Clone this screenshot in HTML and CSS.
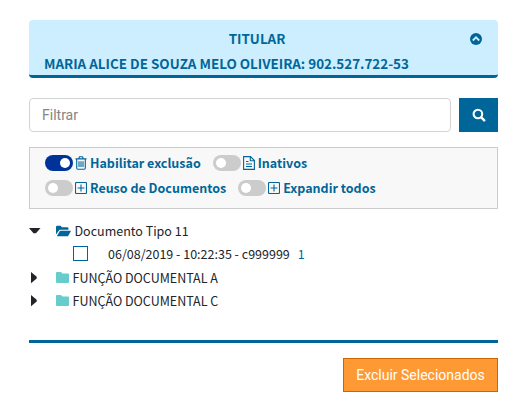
FILE: index.html
```html
<!DOCTYPE html>
<html lang="pt-BR">
<head>
<meta charset="utf-8">
<title>Titular</title>
<link rel="stylesheet" href="styles.css">
</head>
<body>
<main class="page">
  <header class="holder">
    <div class="holder-top">
      <span class="holder-title">TITULAR</span>
      <svg class="holder-icon" viewBox="0 0 12 12"><circle cx="6" cy="6" r="6" fill="#069"/><path d="M2.8 7.5 6 4.3l3.2 3.2" fill="none" stroke="#cef" stroke-width="1.8"/></svg>
    </div>
    <div class="holder-name">MARIA ALICE DE SOUZA MELO OLIVEIRA: 902.527.722-53</div>
  </header>

  <div class="search">
    <input class="search-input" type="text" placeholder="Filtrar">
    <button class="search-button" aria-label="Filtrar"><svg width="14" height="14" viewBox="0 0 14 14"><circle cx="5.9" cy="6" r="4.3" fill="none" stroke="#fff" stroke-width="2.1"/><path d="m9.2 9.4 3 3" stroke="#fff" stroke-width="2.4" stroke-linecap="round"/></svg></button>
  </div>

  <section class="options">
    <div class="option-row">
      <label class="option"><span class="toggle on"></span><svg class="option-icon" viewBox="0 0 12 14"><path d="M.5 2.9h11M3.7 2.7l.8-1.9h3l.8 1.9M1.7 3v9.1q0 1.2 1.1 1.2h6.4q1.1 0 1.1-1.2V3M4 5.2v5.8M6 5.2v5.8M8 5.2v5.8"/></svg><span class="label">Habilitar exclusão</span></label>
      <label class="option"><span class="toggle"></span><svg class="option-icon file" viewBox="0 0 12 14"><path d="M.6.6h6.9l3.9 3.9v8.9H.6zM7.3.8v3.9h4M3 5.5h2.5M3 8h6M3 10.5h6"/></svg><span class="label">Inativos</span></label>
    </div>
    <div class="option-row">
      <label class="option"><span class="toggle"></span><svg class="option-icon plus" viewBox="0 0 12 12"><path d="M1.5.5h9q1 0 1 1v9q0 1-1 1h-9q-1 0-1-1v-9q0-1 1-1M6 2.6v6.8M2.6 6h6.8"/></svg><span class="label">Reuso de Documentos</span></label>
      <label class="option"><span class="toggle"></span><svg class="option-icon plus" viewBox="0 0 12 12"><path d="M1.5.5h9q1 0 1 1v9q0 1-1 1h-9q-1 0-1-1v-9q0-1 1-1M6 2.6v6.8M2.6 6h6.8"/></svg><span class="label">Expandir todos</span></label>
    </div>
  </section>

  <section class="tree">
    <div class="node open">
      <span class="arrow"><svg width="12" height="6" viewBox="0 0 12 6"><path d="M0 0h11.5L7 5.3H4.5z"/></svg></span>
      <svg class="folder-open" viewBox="0 0 15 12"><path d="M0 9.5V2Q0 .7 1.3.7h3.2L6 2.2h5.2q1.3 0 1.3 1.3v1.2H4.2q-.8 0-1.2.7z"/><path d="M.8 11.3 3.7 6.2q.3-.5.8-.5h9.9q.7 0 .4.6l-2.5 4.5q-.3.5-.9.5z"/></svg>
      <span>Documento Tipo 11</span>
    </div>
    <div class="leaf"><span class="checkbox"></span><span>06/08/2019 - 10:22:35 - c999999</span><span class="count">1</span></div>
    <div class="node">
      <span class="arrow"><svg width="6" height="12" viewBox="0 0 6 12"><path d="M0 0 5.7 4.7v1.8L0 11.3z"/></svg></span>
      <svg class="folder" viewBox="0 0 13 11"><path d="M0 1Q0 0 1 0h3.9L6.5 1.6H12q1 0 1 1V10q0 1-1 1H1q-1 0-1-1z"/></svg>
      <span>FUNÇÃO DOCUMENTAL A</span>
    </div>
    <div class="node">
      <span class="arrow"><svg width="6" height="12" viewBox="0 0 6 12"><path d="M0 0 5.7 4.7v1.8L0 11.3z"/></svg></span>
      <svg class="folder" viewBox="0 0 13 11"><path d="M0 1Q0 0 1 0h3.9L6.5 1.6H12q1 0 1 1V10q0 1-1 1H1q-1 0-1-1z"/></svg>
      <span>FUNÇÃO DOCUMENTAL C</span>
    </div>
  </section>

  <footer class="actions"><button class="remove">Excluir Selecionados</button></footer>
</main>
</body>
</html>
```
FILE: styles.css
```css
* { box-sizing: border-box; }
body { margin: 0; background: #fff; }
.page {
  width: 469px;
  margin: 20px 0 0 29px;
  font-family: "Noto Sans CJK SC", "Noto Sans", sans-serif;
  font-size: 12.5px;
  white-space: nowrap;
  color: #212529;
}
.holder {
  height: 58px;
  padding: 7px 16px 0 15px;
  background: #cef;
  border-bottom: 3px solid #069;
  border-radius: 4px;
  color: #069;
  font-weight: 700;
  font-size: 13.42px;
}
.holder-top { display: flex; align-items: center; height: 24px; }
.holder-title { flex: 1; text-align: center; line-height: 22px; padding-bottom: 2px; }
.holder-icon { width: 12px; height: 12px; }
.holder-name { height: 25px; line-height: 25px; }

.search { display: flex; gap: 8px; height: 34px; margin-top: 20px; }
.search-input {
  flex: 1;
  min-width: 0;
  padding: 0 12px;
  border: 1px solid #d3d3d3;
  border-radius: 4px;
  background: #fff;
  font: 14px Roboto, sans-serif;
}
.search-input::placeholder { color: #858585; opacity: 1; }
.search-button {
  display: flex;
  align-items: center;
  justify-content: center;
  width: 39px;
  padding: 0;
  border: 0;
  background: #069;
}

.options {
  height: 62px;
  margin-top: 15px;
  padding: 2px 15px;
  border: 1px solid #ccc;
  background: #f8f8f8;
  color: #069;
  font-weight: 700;
}
.option-row { display: flex; gap: 12px; height: 25px; }
.option { display: flex; align-items: center; }
.toggle {
  width: 28px;
  height: 16px;
  margin-right: 2px;
  padding: 3px;
  border-radius: 8px;
  background: #ccc;
}
.toggle::before {
  content: "";
  display: block;
  width: 10px;
  height: 10px;
  border-radius: 50%;
  background: #fff;
}
.toggle.on { background: #039; }
.toggle.on::before { margin-left: 12px; }
.option-icon { width: 12px; height: 14px; margin-right: 3px; fill: none; stroke: #069; stroke-width: 1.1; }
.option-icon.plus { height: 12px; }

.tree { margin-top: 10px; height: 121px; }
.node { display: flex; align-items: center; height: 23px; }
.arrow { display: flex; width: 27px; padding-left: 2px; }
.arrow svg { fill: #212529; }
.open .arrow { padding-left: 0; }
.folder-open { width: 15px; height: 12px; margin-right: 3.5px; fill: #069; }
.folder { width: 13px; height: 11px; margin-right: 3.5px; fill: #6cc; }
.leaf { display: flex; align-items: center; height: 24px; padding: 0 0 1px 44px; }
.checkbox { width: 15px; height: 15px; margin-right: 20px; border: 1px solid #069; }
.count { margin-left: 8px; color: #069; }

.actions { display: flex; justify-content: flex-end; padding-top: 15px; border-top: 3px solid #069; }
.remove {
  width: 155px;
  height: 34px;
  padding: 0;
  border: 1px solid #c60;
  background: #f93;
  color: #fff;
  font: 14px Roboto, sans-serif;
}
```
